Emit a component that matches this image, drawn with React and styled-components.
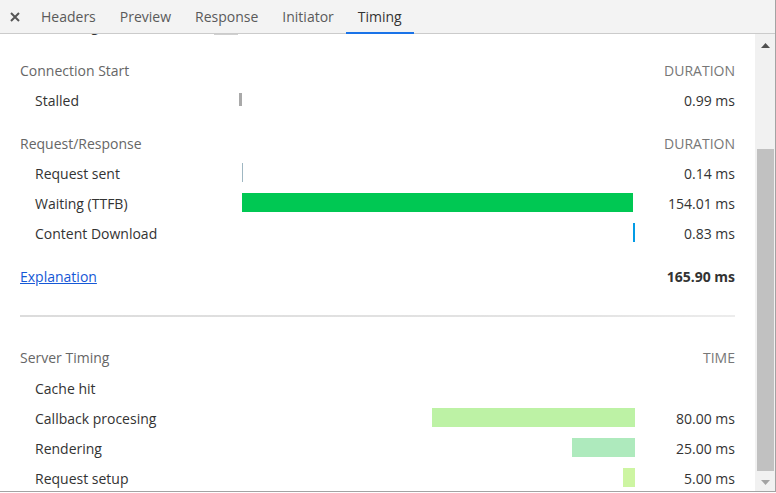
import React from "react";
import styled, { createGlobalStyle } from "styled-components";

const Global = createGlobalStyle`
  html, body { margin: 0; padding: 0; background: #fff; }
  body { font-family: "Open Sans", "Noto Sans", sans-serif; }
`;

const Frame = styled.div`
  width: 776px;
  height: 492px;
  box-sizing: border-box;
  border-right: 1px solid #a3a3a3;
  border-bottom: 1px solid #a3a3a3;
  display: flex;
  flex-direction: column;
  overflow: hidden;
  font-size: 14px;
  color: #333;
`;

const TabBar = styled.div`
  height: 33px;
  flex: none;
  background: #f3f3f3;
  border-bottom: 1px solid #cbcbcb;
  display: flex;
  align-items: stretch;
`;

const Close = styled.div`
  width: 29px;
  display: flex;
  align-items: center;
  justify-content: center;
  padding-left: 1px;
  box-sizing: border-box;
`;

const Tab = styled.div`
  padding: 0 12px;
  display: flex;
  align-items: center;
  color: ${(p) => (p.$active ? "#333" : "#5a5a5a")};
  border-bottom: 2px solid ${(p) => (p.$active ? "#1a73e8" : "transparent")};
  margin-bottom: -1px;
  box-sizing: border-box;
  white-space: nowrap;
`;

const Body = styled.div`
  flex: 1;
  display: flex;
  min-height: 0;
`;

const Content = styled.div`
  flex: 1;
  overflow: hidden;
  padding: 0 20px;
`;

const Inner = styled.div`
  margin-top: -24px;
`;

const Row = styled.div`
  display: grid;
  grid-template-columns: 219px 396px 100px;
  height: 30px;
  align-items: center;
  margin-top: ${(p) => p.$gap || 0}px;
`;

const Label = styled.div`
  padding-left: ${(p) => (p.$sub ? 15 : 0)}px;
  color: ${(p) => (p.$head ? "#666" : "#333")};
  white-space: nowrap;
`;

const Value = styled.div`
  text-align: right;
  color: ${(p) => (p.$head ? "#777" : "#333")};
  font-weight: ${(p) => (p.$bold ? 700 : 400)};
  white-space: nowrap;
`;

const Track = styled.div`
  height: 30px;
  display: flex;
  align-items: center;
  padding-bottom: 2px;
  box-sizing: border-box;
  justify-content: ${(p) => (p.$end ? "flex-end" : "flex-start")};
`;

const Bar = styled.div`
  flex: none;
  box-sizing: border-box;
  height: ${(p) => p.$h || 19}px;
  background: ${(p) => p.$color};
  border: ${(p) => (p.$outline ? "1px solid #d0d0d0" : "none")};
`;

const Link = styled.a`
  color: #1558d6;
  text-decoration: underline;
  cursor: pointer;
`;

const Divider = styled.div`
  height: 2px;
  margin-top: 24px;
  background: linear-gradient(to right, #dcdcdc, #e4e4e4 80%, #ececec);
`;

const Scrollbar = styled.div`
  width: 20px;
  flex: none;
  background: #f1f1f1;
  display: flex;
  flex-direction: column;
`;

const Arrow = styled.div`
  height: ${(p) => p.$h}px;
  display: flex;
  align-items: center;
  justify-content: center;
  padding-left: 1px;
  flex: none;
`;

const ThumbArea = styled.div`
  flex: 1;
  padding: 93px 1px 3px 2px;
  display: flex;
  flex-direction: column;
`;

const Thumb = styled.div`
  flex: 1;
  background: #c1c1c1;
`;

const Tri = ({ up, color }) => (
  <svg width="9" height="5" viewBox="0 0 9 5">
    <polygon points={up ? "0,5 9,5 4.5,0" : "0,0 9,0 4.5,5"} fill={color} />
  </svg>
);

const timingRows = [
  { gap: 0, label: "Queueing", sub: true, bars: [{ off: -25, w: 24, h: 21, outline: true, color: "#fff" }], value: "" },
  { gap: 15, label: "Connection Start", head: true, value: "DURATION" },
  { label: "Stalled", sub: true, bars: [{ off: 0, w: 3, h: 13, color: "#a9a9a9" }], value: "0.99 ms" },
  { gap: 13, label: "Request/Response", head: true, value: "DURATION" },
  { label: "Request sent", sub: true, bars: [{ off: 3, w: 1, h: 19, color: "#9fb7c2" }], value: "0.14 ms" },
  { label: "Waiting (TTFB)", sub: true, bars: [{ off: 3, w: 391, h: 19, color: "#00c853" }], value: "154.01 ms" },
  { label: "Content Download", sub: true, bars: [{ off: 394, w: 2, h: 19, color: "#039be5" }], value: "0.83 ms" },
];

const serverRows = [
  { gap: 1, label: "Cache hit", value: "" },
  { label: "Callback procesing", w: 203, color: "#bdf2a5", value: "80.00 ms" },
  { label: "Rendering", w: 63, color: "#aeeabd", value: "25.00 ms" },
  { label: "Request setup", w: 12, color: "#cdf5a2", value: "5.00 ms" },
];

export default function App() {
  return (
    <>
      <Global />
      <Frame>
        <TabBar>
          <Close>
            <svg width="10" height="10" viewBox="0 0 10 10">
              <path d="M1 1 L9 9 M9 1 L1 9" stroke="#555" strokeWidth="2" />
            </svg>
          </Close>
          <Tab>Headers</Tab>
          <Tab>Preview</Tab>
          <Tab>Response</Tab>
          <Tab>Initiator</Tab>
          <Tab $active>Timing</Tab>
        </TabBar>
        <Body>
          <Content>
            <Inner>
              {timingRows.map((r, i) => (
                <Row key={i} $gap={r.gap}>
                  <Label $sub={r.sub} $head={r.head}>{r.label}</Label>
                  <Track>
                    {(r.bars || []).map((b, j) => (
                      <Bar
                        key={j}
                        $h={b.h}
                        $color={b.color}
                        $outline={b.outline}
                        style={{ marginLeft: b.off, width: b.w }}
                      />
                    ))}
                  </Track>
                  <Value $head={r.head}>{r.value}</Value>
                </Row>
              ))}
              <Row $gap={13}>
                <Label>
                  <Link>Explanation</Link>
                </Label>
                <Track />
                <Value $bold>165.90 ms</Value>
              </Row>
              <Divider />
              <Row $gap={25}>
                <Label $head>Server Timing</Label>
                <Track />
                <Value $head>TIME</Value>
              </Row>
              {serverRows.map((r, i) => (
                <Row key={i} $gap={r.gap}>
                  <Label $sub>{r.label}</Label>
                  <Track $end>
                    {r.w ? <Bar $h={19} $color={r.color} style={{ width: r.w }} /> : null}
                  </Track>
                  <Value>{r.value}</Value>
                </Row>
              ))}
            </Inner>
          </Content>
          <Scrollbar>
            <Arrow $h={22}>
              <Tri up color="#505050" />
            </Arrow>
            <ThumbArea>
              <Thumb />
            </ThumbArea>
            <Arrow $h={17}>
              <Tri color="#a3a3a3" />
            </Arrow>
          </Scrollbar>
        </Body>
      </Frame>
    </>
  );
}
